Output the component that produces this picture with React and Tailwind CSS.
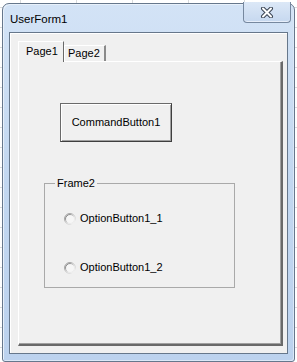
import { useId } from 'react'

const font = { fontFamily: '"Liberation Sans", Arial, sans-serif' }

function CloseGlyph() {
  return (
    <svg width="14" height="11" viewBox="0 0 14 11">
      <path d="M3 1.5 L11 9.5 M11 1.5 L3 9.5" stroke="#3b4554" strokeWidth="4" strokeLinecap="round" />
      <path d="M3 1.5 L11 9.5 M11 1.5 L3 9.5" stroke="#ffffff" strokeWidth="2" strokeLinecap="round" />
    </svg>
  )
}

function Radio() {
  const id = useId()
  return (
    <svg width="12" height="12" viewBox="0 0 12 12" className="shrink-0">
      <defs>
        <linearGradient id={`o${id}`} x1="0" y1="0" x2="1" y2="1">
          <stop offset="0" stopColor="#8c8c8c" />
          <stop offset="0.55" stopColor="#c8c8c8" />
          <stop offset="1" stopColor="#ffffff" />
        </linearGradient>
        <linearGradient id={`i${id}`} x1="0" y1="0" x2="1" y2="1">
          <stop offset="0" stopColor="#5a5a5a" />
          <stop offset="0.6" stopColor="#e6e6e6" />
          <stop offset="1" stopColor="#f0f0f0" />
        </linearGradient>
      </defs>
      <circle cx="6" cy="6" r="5.5" fill="#f6f6f6" stroke={`url(#o${id})`} strokeWidth="1" />
      <circle cx="6" cy="6" r="4.5" fill="none" stroke={`url(#i${id})`} strokeWidth="1" />
    </svg>
  )
}

function OptionButton({ label, className }) {
  return (
    <div className={`flex items-center h-[13px] gap-[4px] ml-[19px] ${className}`}>
      <Radio />
      <span className="text-[11px] leading-[13px] text-black">{label}</span>
    </div>
  )
}

export default function App() {
  return (
    <div
      className="w-[297px] h-[362px] overflow-hidden bg-white bg-[linear-gradient(to_right,#d8dadc_1px,transparent_1px),linear-gradient(to_bottom,#d8dadc_1px,transparent_1px)] bg-size-[56px_20px] bg-position-[20px_7px] pt-[3px] pl-[2px]"
      style={font}
    >
      {/* window frame */}
      <div className="w-[293px] h-[359px] flex flex-col border border-[#66778c] rounded-t-[7px] rounded-b-[3px] bg-linear-to-b from-[#d3e3f6] via-[#c2d7f0] to-[#bcd2ee] px-[6px] pb-[7px] shadow-[inset_1px_1px_0_#e8f1fb,inset_-1px_-1px_0_#dbe8f7]">
        {/* title bar */}
        <div className="h-[28px] flex items-start justify-between shrink-0">
          <span className="mt-[8px] ml-[1px] text-[11.5px] leading-[15px] text-black">UserForm1</span>
          <button className="-mt-[2px] -mr-[3px] w-[48px] h-[21px] flex items-center justify-center border border-[#76889f] border-t-0 rounded-b-[4px] bg-linear-to-b from-[#dce8f7] to-[#c6d8ef] shadow-[inset_0_-1px_0_#e6eefa]">
            <CloseGlyph />
          </button>
        </div>

        {/* client area */}
        <div className="flex-1 flex flex-col border border-[#66778b] bg-[#f0f0f0] pt-[8px] pl-[8px] pr-[4px] pb-[7px] shadow-[inset_1px_1px_0_#ffffff]">
          {/* tabs */}
          <div className="flex items-end h-[20px] text-[11px] text-black">
            <div className="relative z-10 h-[21px] -mb-[1px] w-[46px] bg-[#f0f0f0] border-t border-l border-white border-r border-r-[#696969] flex items-start pl-[7px] pt-[3px] leading-[13px]">
              Page1
            </div>
            <div className="h-[16px] w-[42px] border-t border-l border-white border-r-2 border-r-[#8a8a8a] flex items-start pl-[3px] pt-[1px] leading-[13px]">
              Page2
            </div>
          </div>

          {/* page body */}
          <div className="w-[265px] h-[285px] border-t border-l border-white border-r-2 border-b-2 border-r-[#696969] border-b-[#696969] shadow-[inset_-1px_-1px_0_#a0a0a0] flex flex-col items-start">
            <button className="ml-[41px] mt-[41px] w-[112px] h-[39px] bg-[#f0f0f0] border border-[#6a6a6a] border-r-[#3f3f3f] border-b-[#3f3f3f] shadow-[inset_1px_1px_0_#ffffff,inset_-1px_-1px_0_#a0a0a0] text-[11px] text-black">
              CommandButton1
            </button>

            <div className="ml-[25px] mt-[41px] w-[191px] h-[105px] border border-[#a9a9a9] flex flex-col items-start">
              <span className="-mt-[7px] ml-[10px] px-[2px] bg-[#f0f0f0] text-[11px] leading-[13px] text-black">Frame2</span>
              <OptionButton label="OptionButton1_1" className="mt-[22px]" />
              <OptionButton label="OptionButton1_2" className="mt-[36px]" />
            </div>
          </div>
        </div>
      </div>
    </div>
  )
}
